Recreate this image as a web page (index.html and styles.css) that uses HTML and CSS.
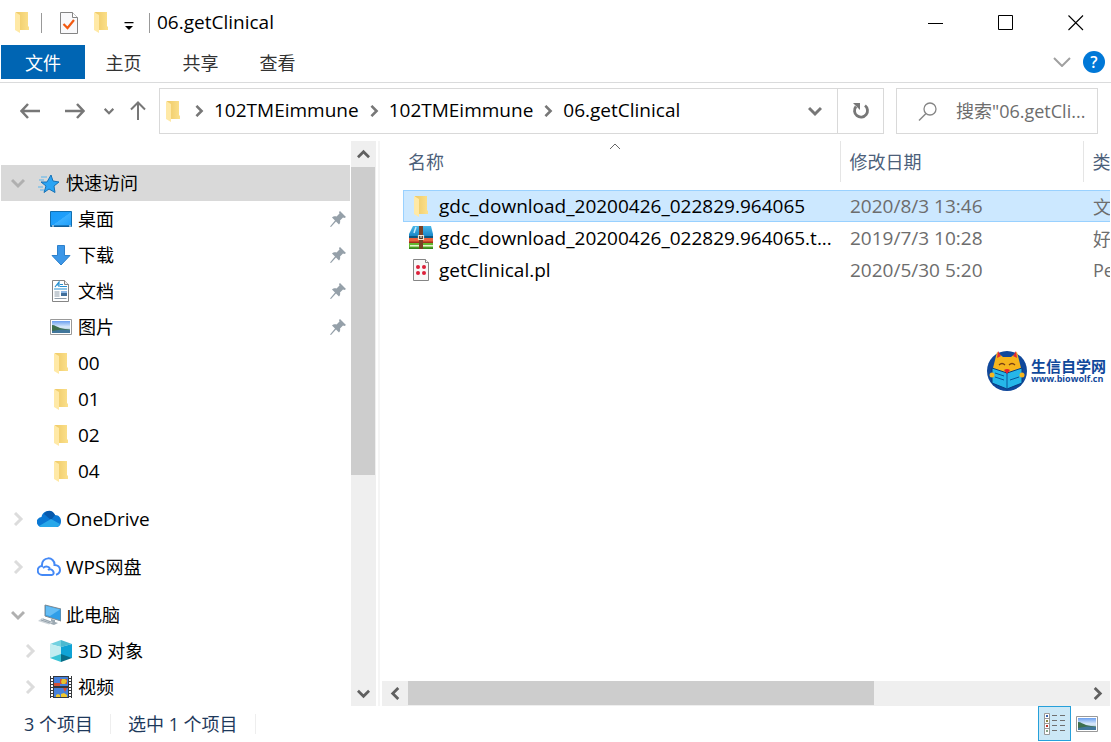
FILE: index.html
```html
<!DOCTYPE html>
<html lang="zh-CN">
<head>
  <meta charset="UTF-8">
  <title>06.getClinical</title>
  <meta name="viewport" content="width=device-width, initial-scale=1">
  <link rel="stylesheet" href="styles.css">
</head>
<body>

<!-- shared icons -->
<svg class="defs" aria-hidden="true">
  <defs>
    <linearGradient id="gold" x1="0" x2="1"><stop offset="0" stop-color="#efca66"/><stop offset="1" stop-color="#fbe08c"/></linearGradient>
    <linearGradient id="screen" x1="0" y1="0" x2="1" y2="1"><stop offset="0" stop-color="#1b9bf8"/><stop offset=".5" stop-color="#1e9ffb"/><stop offset=".52" stop-color="#3bb0ff"/><stop offset="1" stop-color="#1d9dfa"/></linearGradient>
    <linearGradient id="sky" x1="0" y1="0" x2="0" y2="1"><stop offset="0" stop-color="#6a9ff0"/><stop offset=".5" stop-color="#dcebfa"/><stop offset="1" stop-color="#7ea5c4"/></linearGradient>
    <linearGradient id="blue-book" x1="0" y1="0" x2="0" y2="1"><stop offset="0" stop-color="#49b7e8"/><stop offset="1" stop-color="#0f7dc0"/></linearGradient>
  </defs>
  <symbol id="folder" viewBox="0 0 14 21">
    <path d="M1 0h12v14l1 1v3H4z" fill="url(#gold)"/>
    <path d="M0 0l5 3v18l-5-3z" fill="#ffe9a6"/>
  </symbol>
  <symbol id="chev-right" viewBox="0 0 14 14">
    <path d="M4 1l6 6-6 6" fill="none" stroke="currentColor" stroke-width="3"/>
  </symbol>
  <symbol id="chev-down" viewBox="0 0 14 14">
    <path d="M1 4l6 6 6-6" fill="none" stroke="currentColor" stroke-width="3"/>
  </symbol>
  <symbol id="pin" viewBox="0 0 16 16">
    <path d="M10 0l6 6-1.500 1-1.500-.5-3 3c.5 1.500 0 3-1 4L6 10.500 1 16l-1-.5L5 9.500 2 6.500c1-1 3-1.500 4.500-1l3-3L9 1z" fill="#95a0a9"/>
  </symbol>
  <symbol id="picture" viewBox="0 0 22 16">
    <path d="M.5.5h21v15H.5z" fill="#fff" stroke="#999"/>
    <path d="M2 2h18v12H2z" fill="url(#sky)"/>
    <path d="M2 6c3 0 5 2 8 3s7 1 10 1.500V12H2z" fill="#3d6f4d"/>
    <path d="M2 12l9-1.500 9 .5v3H2z" fill="#41769b"/>
  </symbol>
</svg>

<div class="window">
  <header class="titlebar">
    <svg class="folder" aria-hidden="true"><use href="#folder"/></svg>
    <span class="sep"></span>
    <button class="quick-btn" aria-label="属性">
      <svg width="18" height="22" viewBox="0 0 18 22"><path d="M.5.500h12l5 5v16H.5z" fill="#f9f9fb" stroke="#858585"/><path d="M12.500.5v5h5" fill="#fff" stroke="#858585"/><path d="M3.500 12l4 4 6.500-8" fill="none" stroke="#f25a12" stroke-width="2.200"/></svg>
    </button>
    <button class="quick-btn" aria-label="新建文件夹"><svg class="folder"><use href="#folder"/></svg></button>
    <button class="quick-btn" aria-label="自定义快速访问工具栏">
      <svg width="10" height="8" viewBox="0 0 10 8"><path d="M.5 0h9v1.300h-9zM1 4h8L5 8z"/></svg>
    </button>
    <span class="sep"></span>
    <h1>06.getClinical</h1>
    <div class="controls">
      <button aria-label="最小化"><svg width="16" height="16"><path d="M0 8.500h15" stroke="#000"/></svg></button>
      <button aria-label="最大化"><svg width="16" height="16"><path d="M.5.500h14v14H.5z" fill="none" stroke="#000"/></svg></button>
      <button aria-label="关闭"><svg width="16" height="16"><path d="M.5.500l14.500 14.500M15 .5L.5 15" stroke="#000" stroke-width="1.100"/></svg></button>
    </div>
  </header>

  <nav class="ribbon">
    <button class="tab active">文件</button>
    <button class="tab">主页</button>
    <button class="tab">共享</button>
    <button class="tab">查看</button>
    <button class="expand" aria-label="展开功能区"><svg width="18" height="10" viewBox="0 0 18 10"><path d="M1 1l8 8 8-8" fill="none" stroke="#a0a0a0" stroke-width="2"/></svg></button>
    <button class="help" aria-label="帮助">?</button>
  </nav>

  <div class="toolbar">
    <div class="history">
      <button aria-label="后退"><svg width="20" height="16" viewBox="0 0 20 16"><path d="M8 1L1.500 8 8 15M1.500 8H20" fill="none" stroke="#777" stroke-width="2.500"/></svg></button>
      <button aria-label="前进"><svg width="20" height="16" viewBox="0 0 20 16"><path d="M12 1l6.500 7-6.500 7M18.500 8H0" fill="none" stroke="#777" stroke-width="2.500"/></svg></button>
      <button aria-label="最近位置"><svg width="10" height="10" viewBox="0 0 14 14"><use href="#chev-down"/></svg></button>
      <button aria-label="上移"><svg width="16" height="20" viewBox="0 0 16 20"><path d="M1 8.500L8 1.500l7 7M8 1.500V19" fill="none" stroke="#777" stroke-width="2"/></svg></button>
    </div>
    <div class="address">
      <svg class="folder" aria-hidden="true"><use href="#folder"/></svg>
      <svg class="chev"><use href="#chev-right"/></svg>
      <a href="#">102TMEimmune</a>
      <svg class="chev"><use href="#chev-right"/></svg>
      <a href="#">102TMEimmune</a>
      <svg class="chev"><use href="#chev-right"/></svg>
      <a href="#">06.getClinical</a>
      <button class="drop" aria-label="以前的位置"><svg class="chev"><use href="#chev-down"/></svg></button>
      <button class="refresh" aria-label="刷新">
        <svg width="18" height="18" viewBox="0 0 18 18"><path d="M13 3.500A6.500 6.500 0 1 1 4 4.500" fill="none" stroke="#777" stroke-width="2.800"/><path d="M1 1h7v7z" fill="#777"/></svg>
      </button>
    </div>
    <label class="search">
      <svg width="19" height="19" viewBox="0 0 19 19" aria-hidden="true"><circle cx="12" cy="7" r="6" fill="none" stroke="#858585" stroke-width="1.300"/><path d="M8 11.500L1 18.500" stroke="#858585" stroke-width="1.400"/></svg>
      <input type="text" aria-label="搜索" placeholder='搜索"06.getCli...'>
    </label>
  </div>

  <main class="content">
    <aside class="sidebar">
      <ul class="tree">
        <li class="group">
          <a class="node selected" href="#">
            <svg class="chev open"><use href="#chev-down"/></svg>
            <svg class="icon" viewBox="0 0 24 24"><path d="M14 4l2 6 6 1-5 4 1 6.500-6-3.500-5 3.500 2-6.500-5-4h6z" fill="#2aa4f4" stroke="#1673b8"/><path d="M4 6h6M2 9h5M1 16h5M3 19h4" stroke="#5bb5ee" stroke-width="1.200"/></svg>
            <span>快速访问</span>
          </a>
          <ul>
            <li><a class="node child" href="#"><svg class="icon" viewBox="0 0 24 24"><path d="M1.500 4.500h21v15h-21z" fill="url(#screen)" stroke="#126fb0"/><path d="M2 19h20" stroke="#0a4f85"/><path d="M3 19h2M20 19h2" stroke="#fff"/></svg><span>桌面</span><svg class="pin"><use href="#pin"/></svg></a></li>
            <li><a class="node child" href="#"><svg class="icon" viewBox="0 0 24 24"><path d="M8.500 2.500h7v10H21L12 22l-9-9.500h5.500z" fill="#3c97e8" stroke="#2d80cb"/></svg><span>下载</span><svg class="pin"><use href="#pin"/></svg></a></li>
            <li><a class="node child" href="#"><svg class="icon" viewBox="0 0 24 24"><path d="M3.500 1.500h12l4 4v17h-16z" fill="#fff" stroke="#858585"/><path d="M15.500 1.500v4h4" fill="#eee" stroke="#858585"/><path d="M6 8l4-5v5M7 6h3M11 5.500h3M11 7.500h7M5 10h13" fill="none" stroke="#2690d2" stroke-width="1.200"/><path d="M5.500 13h5M5.500 15h5M5.500 17h5M5.500 19.500h12" stroke="#8d9ca9"/><path d="M12 12h6v5h-6z" fill="#416f9a"/><path d="M12 12h6v2h-6z" fill="#8db7e6"/></svg><span>文档</span><svg class="pin"><use href="#pin"/></svg></a></li>
            <li><a class="node child" href="#"><svg class="icon" viewBox="0 0 24 24"><use href="#picture" x="1" y="4" width="22" height="16"/></svg><span>图片</span><svg class="pin"><use href="#pin"/></svg></a></li>
            <li><a class="node child" href="#"><span class="icon"><svg class="folder"><use href="#folder"/></svg></span><span class="latin">00</span></a></li>
            <li><a class="node child" href="#"><span class="icon"><svg class="folder"><use href="#folder"/></svg></span><span class="latin">01</span></a></li>
            <li><a class="node child" href="#"><span class="icon"><svg class="folder"><use href="#folder"/></svg></span><span class="latin">02</span></a></li>
            <li><a class="node child" href="#"><span class="icon"><svg class="folder"><use href="#folder"/></svg></span><span class="latin">04</span></a></li>
          </ul>
        </li>
        <li class="group">
          <a class="node" href="#">
            <svg class="chev"><use href="#chev-right"/></svg>
            <svg class="icon" viewBox="0 0 24 24"><path d="M5 20a5 5 0 0 1-.5-10C6 3 15 2 18 8c4 0 6 3 6 6 0 4-2 6-5 6z" fill="#0a78d4"/><path d="M7 7c3-5 9-4 11 1l-4 5z" fill="#0759ac"/><path d="M2 19l12-7 9 5c-1 2-2 3-4 3H5c-1 0-2 0-3-1z" fill="#28a8ea"/></svg>
            <span class="latin">OneDrive</span>
          </a>
        </li>
        <li class="group">
          <a class="node" href="#">
            <svg class="chev"><use href="#chev-right"/></svg>
            <svg class="icon" viewBox="0 0 24 24"><path d="M15 20H5.500a4.500 4.500 0 0 1-.5-9C4 1 18 1 17.500 10c3 0 5.500 2 5.500 5 0 2.500-1.500 4-4 4.800M6 13c2-2 5-1.500 7 0M11 15c4-3 8 4 4 5" fill="none" stroke="#4489f6" stroke-width="2"/></svg>
            <span><span class="latin">WPS</span>网盘</span>
          </a>
        </li>
        <li class="group">
          <a class="node" href="#">
            <svg class="chev open"><use href="#chev-down"/></svg>
            <svg class="icon" viewBox="0 0 24 24"><path d="M8 2l16 4v12l-16-5z" fill="#2f9ee8" stroke="#7e8990"/><path d="M9 3l14 3.500L13 13l-4-1z" fill="#65bdf4"/><path d="M14 16l4 1v2l3 1-4 2-6-2 3-1z" fill="#9ca9b2"/><path d="M5 15l11 4-4 2.500L1 18z" fill="#ccd3d8"/><path d="M4 17l9 3M6 16l8 3" stroke="#96a3ad"/></svg>
            <span>此电脑</span>
          </a>
          <ul>
            <li><a class="node child" href="#"><svg class="chev"><use href="#chev-right"/></svg><svg class="icon" viewBox="0 0 24 24"><path d="M1 5l11-4v7z" fill="#73d1e0"/><path d="M12 1l11 4-11 3z" fill="#4bb9d0"/><path d="M1 5l11 3v10L1 19z" fill="#c2edf1"/><path d="M12 8l11-3v14l-11-1z" fill="#0fa3d5"/><path d="M1 19l11-4v8z" fill="#3ac4d6"/><path d="M12 15l11 4-11 4z" fill="#086d88"/></svg><span><span class="latin">3D</span> 对象</span></a></li>
            <li><a class="node child" href="#"><svg class="chev"><use href="#chev-right"/></svg><svg class="icon" viewBox="0 0 24 24"><path d="M1 1h22v22H1z" fill="#35383c"/><path d="M5 2h14v9H5zM5 13h14v9H5z" fill="#4681db"/><path d="M3 1v22M21 1v22" stroke="#fff" stroke-width="2" stroke-dasharray="2 1"/><path d="M5 8h6v3H5zM11 4h7v5h-7z" fill="#d55136"/><path d="M13 4h3l2 2-2 3h-3l-1-2z" fill="#e2c52d"/><path d="M14 13h4l-2 4z" fill="#dc4931"/><path d="M7 22v-2l2-1 2 1v2zM12 22v-3l3-1 3 2v2z" fill="#efc72d"/></svg><span>视频</span></a></li>
          </ul>
        </li>
      </ul>
      <div class="scrollbar vertical">
        <button aria-label="向上滚动"><svg class="chev" viewBox="0 0 14 14"><use class="flip" href="#chev-down"/></svg></button>
        <div class="track"><div class="thumb"></div></div>
        <button aria-label="向下滚动"><svg class="chev" viewBox="0 0 14 14"><use href="#chev-down"/></svg></button>
      </div>
    </aside>

    <section class="files">
      <div class="list">
        <table>
          <colgroup><col class="name"><col class="date"><col class="type"></colgroup>
          <thead>
            <tr>
              <th>名称<svg class="sort" width="12" height="6" viewBox="0 0 12 6"><path d="M1 6l5-5 5 5" fill="none" stroke="#666"/></svg></th>
              <th>修改日期</th>
              <th>类型</th>
            </tr>
          </thead>
          <tbody>
            <tr class="selected">
              <td><div class="file"><span class="icon"><svg class="folder"><use href="#folder"/></svg></span><span>gdc_download_20200426_022829.964065</span></div></td>
              <td class="date">2020/8/3 13:46</td>
              <td class="kind">文件夹</td>
            </tr>
            <tr>
              <td><div class="file"><svg class="icon" viewBox="0 0 24 24"><path d="M4 0h18l2 8v4H0V8z" fill="url(#blue-book)"/><path d="M7 1L5 7" stroke="#c4ecff" stroke-width="1.500"/><path d="M0 10h24v2H0z" fill="#075783"/><path d="M0 12h24v4H0z" fill="#e8633d"/><path d="M0 15.500h24V17H0z" fill="#a32d1a"/><path d="M0 17h24v5H0z" fill="#65b82f"/><path d="M1 19h23v1.500H1z" fill="#e4f2cf"/><path d="M0 21.500h24V23H0z" fill="#34851b"/><path d="M10 0h4v23h-4z" fill="#794124"/><path d="M9.500 9.500h5v4h-5z" fill="#4d3826" stroke="#eee3cf" stroke-width="1.200"/><path d="M12 9v3" stroke="#fff"/></svg><span>gdc_download_20200426_022829.964065.t...</span></div></td>
              <td class="date">2019/7/3 10:28</td>
              <td class="kind">好压</td>
            </tr>
            <tr>
              <td><div class="file"><svg class="icon" viewBox="0 0 24 24"><path d="M4.500 1.500h12l3 3v18h-15z" fill="#f8f8f8" stroke="#858585"/><path d="M16.500 1.500v3h3" fill="#fff" stroke="#858585"/><g fill="#dc2039"><circle cx="9" cy="9" r="2"/><circle cx="15" cy="9" r="2"/><circle cx="9" cy="15" r="2"/><circle cx="15" cy="15" r="2"/></g></svg><span>getClinical.pl</span></div></td>
              <td class="date">2020/5/30 5:20</td>
              <td class="kind">Perl</td>
            </tr>
          </tbody>
        </table>
      </div>
      <div class="watermark">
        <svg width="40" height="42" viewBox="0 0 40 42" aria-hidden="true">
          <circle cx="20" cy="21" r="20" fill="#10489b"/>
          <path d="M10 2l6 5h8l6-5 4 16-5 6H11l-5-6z" fill="#f5b51d"/>
          <path d="M11 1l3 5-4 2zM29 1l-3 5 4 2z" fill="#df2a37"/>
          <path d="M12 15q3-3 6 0M22 15q3-3 6 0" fill="none" stroke="#784115" stroke-width="1.200"/>
          <path d="M5 18l15 5 15-5v15l-15 6-15-6z" fill="#25b7e9" stroke="#083c81"/>
          <path d="M20 23v16M8 23l9 3M8 27l9 3M23 30l9-3" stroke="#0a5599"/>
          <path d="M17 20q3-2 6 0l-3 4z" fill="#e32132"/>
          <circle cx="5" cy="25" r="2.500" fill="#f5b51d"/><circle cx="35" cy="25" r="2.500" fill="#f5b51d"/>
        </svg>
        <div class="brand"><strong>生信自学网</strong><small>www.biowolf.cn</small></div>
      </div>
      <div class="scrollbar horizontal">
        <button aria-label="向左滚动"><svg class="chev" viewBox="0 0 14 14"><use class="flip" href="#chev-right"/></svg></button>
        <div class="track"><div class="thumb"></div></div>
        <button aria-label="向右滚动"><svg class="chev" viewBox="0 0 14 14"><use href="#chev-right"/></svg></button>
      </div>
    </section>
  </main>

  <footer class="statusbar">
    <span>3 个项目</span>
    <span>选中 1 个项目</span>
    <div class="views">
      <button class="active" aria-label="详细信息">
        <svg width="22" height="22" viewBox="0 0 22 22"><path d="M.5.500h5v21h-5zM.5 5.500h5M.5 10.500h5M.5 15.500h5" fill="#fff" stroke="#999"/><path d="M2 3h2" stroke="#3562b0" stroke-width="2"/><path d="M2 8h2" stroke="#8b8846" stroke-width="2"/><path d="M2 13h2" stroke="#c0342b" stroke-width="2"/><path d="M2 18h2" stroke="#89a789" stroke-width="2"/><path d="M8 2.500h5M16 2.500h5M8 7.500h5M16 7.500h5M8 12.500h5M16 12.500h5M8 17.500h5M16 17.500h5" stroke="#707070"/></svg>
      </button>
      <button aria-label="大图标"><svg width="22" height="16"><use href="#picture"/></svg></button>
    </div>
  </footer>
</div>

</body>
</html>
```
FILE: styles.css
```css
* {
  box-sizing: border-box;
  margin: 0;
  padding: 0;
}

body {
  font-family: 'Open Sans', 'Noto Sans CJK SC', sans-serif;
  font-size: 18px;
  color: #000;
  background: #fff;
}

button {
  font: inherit;
  color: inherit;
  background: none;
  border: none;
  display: flex;
  align-items: center;
  justify-content: center;
}

a {
  color: inherit;
  text-decoration: none;
}

ul {
  list-style: none;
}

svg {
  flex: none;
  display: block;
}

.defs {
  position: absolute;
  width: 0;
  height: 0;
}

.window {
  height: 100vh;
  display: flex;
  flex-direction: column;
  overflow: hidden;
}

.folder {
  width: 14px;
  height: 21px;
}

.chev {
  width: 14px;
  height: 14px;
}

.flip {
  transform: rotate(180deg);
  transform-origin: 7px 7px;
}

.latin {
  font-size: 19px;
}

/* title bar */
.titlebar {
  height: 45px;
  flex: none;
  display: flex;
  align-items: center;
  padding-left: 15px;
}

.sep {
  width: 1px;
  height: 20px;
  background: #999;
  margin: 0 11px 0 12px;
}

.quick-btn {
  width: 32px;
}

.quick-btn + .quick-btn + .quick-btn {
  width: 24px;
  padding-top: 6px;
}

.quick-btn + .sep {
  margin: 0 7px 0 8px;
}

.titlebar h1 {
  font-size: 19px;
  line-height: 24px;
  padding-bottom: 2px;
  font-weight: normal;
}

.controls {
  display: flex;
  margin-left: auto;
}

.controls button {
  width: 70px;
  height: 45px;
}

/* ribbon tabs */
.ribbon {
  display: flex;
  flex: none;
  height: 38px;
  padding: 0 6px 3px 1px;
  border-bottom: 1px solid #dadbdc;
  color: #333;
}

.tab {
  width: 77px;
}

.tab.active {
  width: 84px;
  background: #0065b3;
  color: #fff;
}

.expand {
  margin-left: auto;
  width: 42px;
}

.help {
  width: 22px;
  height: 22px;
  border-radius: 50%;
  background: #0078d7;
  color: #fff;
  font-size: 16px;
  font-weight: 600;
  align-self: center;
}

/* address bar */
.toolbar {
  display: flex;
  flex: none;
  padding: 5px 13px 7px 12px;
  color: #777;
}

.history {
  display: flex;
  width: 147px;
}

.history button {
  width: 36px;
}

.history button:nth-child(2) {
  width: 54px;
}

.history button:nth-child(3) {
  width: 16px;
}

.history button:nth-child(4) {
  width: 42px;
}

.address {
  flex: 1;
  display: flex;
  align-items: center;
  height: 46px;
  border: 1px solid #d9d9d9;
  padding-left: 6px;
  font-size: 19px;
}

.address a {
  color: #000;
  padding-bottom: 2px;
}

.address > .chev {
  width: 12px;
  height: 12px;
  margin: 0 9px;
}

.address > .folder + .chev {
  margin-left: 13px;
}

.drop {
  margin-left: auto;
  width: 44px;
  height: 100%;
}

.refresh {
  width: 46px;
  height: 100%;
  border-left: 1px solid #d9d9d9;
}

.search {
  width: 202px;
  margin-left: 12px;
  padding-left: 21px;
  display: flex;
  align-items: center;
  gap: 19px;
  border: 1px solid #d9d9d9;
}

.search input {
  width: 100%;
  min-width: 0;
  border: none;
  outline: none;
  font: inherit;
}

.search input::placeholder {
  color: #6d6d6d;
}

/* panes */
.content {
  flex: 1;
  min-height: 0;
  display: flex;
}

.sidebar {
  width: 380px;
  flex: none;
  display: flex;
  padding-left: 1px;
  border-right: 2px solid #f5f5f5;
}

.tree {
  flex: 1;
  padding-top: 24px;
  overflow: hidden;
}

.group {
  margin-bottom: 12px;
}

.node {
  display: flex;
  align-items: center;
  height: 36px;
  margin-right: 1px;
  padding: 0 4px 0 10px;
  line-height: 24px;
  white-space: nowrap;
}

.node.selected {
  background: #d9d9d9;
}

.node .chev {
  color: #dcdcdc;
}

.node .chev.open {
  color: #b0b0b0;
}

.icon {
  width: 24px;
  height: 24px;
  display: flex;
  align-items: center;
  justify-content: center;
  flex: none;
}

.node .icon {
  margin: 0 5px 0 12px;
}

.child {
  padding-left: 22px;
}

.child > .icon:first-child {
  margin-left: 26px;
}

.pin {
  width: 16px;
  height: 16px;
  margin-left: auto;
}

.scrollbar {
  flex: none;
  display: flex;
  background: #efefef;
  color: #606060;
}

.scrollbar .chev {
  width: 13px;
  height: 13px;
}

.scrollbar button {
  width: 25px;
  height: 26px;
}

.track {
  flex: 1;
}

.thumb {
  background: #cdcdcd;
}

.vertical {
  flex-direction: column;
  width: 25px;
  margin-right: 2px;
}

.vertical .thumb {
  width: 24px;
  height: 60%;
}

.horizontal {
  height: 25px;
}

.horizontal button {
  width: 26px;
  height: 25px;
}

.horizontal .thumb {
  width: 69%;
  height: 24px;
}

/* file list */
.files {
  flex: 1;
  min-width: 0;
  display: flex;
  flex-direction: column;
  padding: 0 1px 0 2px;
  position: relative;
}

.list {
  flex: 1;
  padding-left: 21px;
  overflow: hidden;
}

table {
  width: 820px;
  table-layout: fixed;
  border-collapse: collapse;
}

col.name {
  width: 437px;
}

col.date {
  width: 243px;
}

th {
  height: 41px;
  padding: 0 0 2px 9px;
  text-align: left;
  font-weight: normal;
  color: #4c607a;
  border-right: 1px solid #e5e5e5;
  position: relative;
}

th:first-child {
  padding-left: 5px;
}

.sort {
  position: absolute;
  top: 2px;
  right: 50%;
}

tbody::before {
  content: '';
  display: block;
  height: 8px;
}

td {
  height: 32px;
  padding-left: 10px;
  color: #6d6d6d;
  white-space: nowrap;
}

td:first-child {
  padding-left: 6px;
  color: #000;
}

td.date, .file {
  font-size: 19px;
}

.file {
  display: flex;
  align-items: center;
  gap: 6px;
  height: 30px;
}

tr.selected {
  background: #cce8ff;
  outline: 1px solid #99d1ff;
  outline-offset: -1px;
}

.watermark {
  position: absolute;
  right: 5px;
  top: 209px;
  display: flex;
  align-items: center;
  gap: 4px;
  color: #10489b;
}

.brand {
  width: 75px;
}

.brand strong, .brand small {
  display: block;
  font-size: 15px;
  line-height: 16px;
  white-space: nowrap;
}

.brand small {
  font-size: 9px;
  line-height: 10px;
  font-weight: bold;
}

/* status bar */
.statusbar {
  flex: none;
  display: flex;
  align-items: center;
  height: 36px;
  padding: 0 8px 1px 7px;
  color: #1e395b;
}

.statusbar span {
  padding: 0 17px;
  line-height: 20px;
  border-right: 1px solid #eee;
}

.views {
  display: flex;
  margin-left: auto;
}

.views button {
  width: 32px;
  height: 35px;
}

.views .active {
  width: 33px;
  background: #cce8f6;
  border: 1px solid #26a0da;
}
```
